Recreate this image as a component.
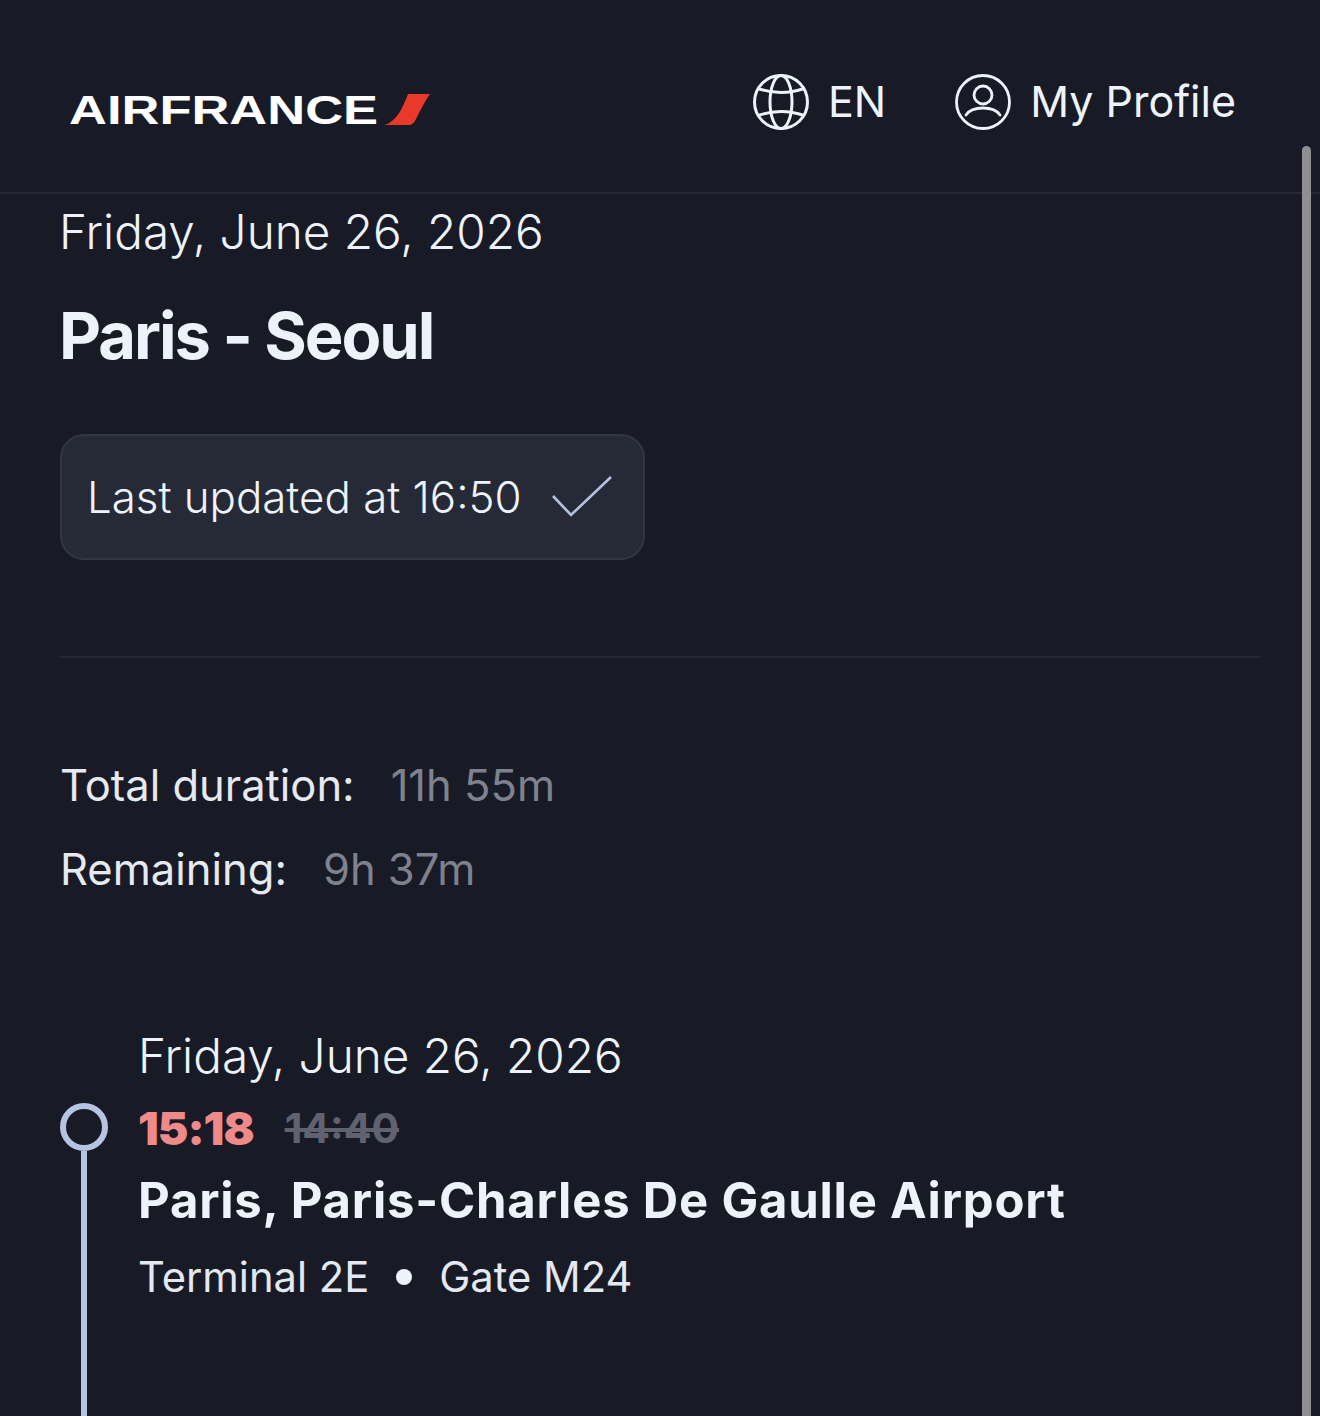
<script lang="ts">
</script>

<div class="page">
	<header class="topbar">
		<div class="logo">
			<span class="wordmark">AIRFRANCE</span>
			<svg class="swoosh" width="46" height="34" viewBox="0 0 46 34">
				<path d="M23 1H45C40 8 35 18 31 26C29 30 27 32 23 32H0C12 28 18 14 23 1Z" fill="#e8392a" />
			</svg>
		</div>
		<nav class="nav">
			<button class="nav-item">
				<svg width="56" height="56" viewBox="0 0 56 56" fill="none" stroke="currentColor" stroke-width="3">
					<circle cx="28" cy="28" r="26.5" />
					<ellipse cx="28" cy="28" rx="11" ry="26.5" />
					<path d="M5 14.5Q28 22.5 51 14.5M5 41.5Q28 33.5 51 41.5" />
				</svg>
				<span>EN</span>
			</button>
			<button class="nav-item">
				<svg width="56" height="56" viewBox="0 0 56 56" fill="none" stroke="currentColor" stroke-width="2.8">
					<circle cx="28" cy="28" r="26.5" />
					<circle cx="28" cy="21" r="9" />
					<path d="M11 41C15 35 22 34 28 34C34 34 41 35 45 41" stroke-linecap="round" />
				</svg>
				<span>My Profile</span>
			</button>
		</nav>
	</header>

	<main class="content">
		<p class="date first">Friday, June 26, 2026</p>
		<h1>Paris - Seoul</h1>
		<div class="status">
			<span>Last updated at 16:50</span>
			<svg width="62" height="44" viewBox="0 0 62 44" fill="none" stroke="#b5c2de" stroke-width="2.6">
				<path d="M2 21L20 40L60 2" />
			</svg>
		</div>
		<hr />
		<dl class="durations">
			<div><dt>Total duration:</dt><dd>11h 55m</dd></div>
			<div><dt>Remaining:</dt><dd>9h 37m</dd></div>
		</dl>
		<section class="leg">
			<div class="track">
				<span class="dot"></span>
				<span class="line"></span>
			</div>
			<div class="stop">
				<p class="date">Friday, June 26, 2026</p>
				<p class="times"><strong>15:18</strong><s>14:40</s></p>
				<h2>Paris, Paris-Charles De Gaulle Airport</h2>
				<p class="gate">Terminal 2E<i></i>Gate M24</p>
			</div>
		</section>
	</main>

	<div class="scrollbar"></div>
</div>

<style>
	:global(body) {
		background: #181b25;
	}
	.page {
		position: relative;
		height: 1416px;
		overflow: hidden;
		background: #181b25;
		color: #eef3fb;
		font-family: Inter, sans-serif;
	}
	.topbar {
		height: 194px;
		box-sizing: border-box;
		border-bottom: 2px solid #252833;
		display: flex;
		justify-content: space-between;
		padding: 0 84px 0 69px;
	}
	.logo {
		display: flex;
		align-items: center;
		margin-top: 28px;
	}
	.wordmark {
		font-family: "Liberation Sans", sans-serif;
		font-weight: 700;
		font-size: 41px;
		line-height: 1;
		color: #fff;
		transform: scaleX(1.28);
		transform-origin: left center;
		margin-right: 75px;
	}
	.nav {
		display: flex;
		gap: 69px;
		padding-top: 74px;
	}
	.nav-item {
		display: flex;
		align-items: flex-start;
		gap: 19px;
		padding: 0;
		border: 0;
		background: none;
		color: inherit;
		font: inherit;
		font-size: 43px;
		line-height: 56px;
	}
	.nav-item span {
		margin-top: -1px;
	}
	.content {
		padding: 0 60px;
	}
	.date {
		margin: 0;
		font-size: 47.7px;
		line-height: 76px;
		font-weight: 300;
	}
	.date.first {
		margin-left: -1px;
	}
	h1 {
		margin: 28px 0 0 -1px;
		font-size: 65px;
		line-height: 76px;
		font-weight: 700;
		letter-spacing: -2px;
	}
	.status {
		display: inline-flex;
		align-items: center;
		gap: 29px;
		height: 126px;
		box-sizing: border-box;
		margin-top: 60px;
		padding: 0 30px 0 25px;
		background: #262a36;
		border: 2px solid #323644;
		border-radius: 24px;
		font-size: 43.8px;
		font-weight: 300;
		vertical-align: top;
	}
	hr {
		margin: 96px 0 0;
		border: 0;
		height: 2px;
		background: #252833;
	}
	.durations {
		margin: 99px 0 0;
		font-size: 43.5px;
		line-height: 56px;
	}
	.durations div {
		display: flex;
		gap: 36px;
		margin-bottom: 28px;
	}
	dt {
		color: #e6e9f0;
	}
	dd {
		margin: 0;
		color: #7f828e;
	}
	.leg {
		display: flex;
		gap: 30px;
		margin-top: 121px;
	}
	.track {
		width: 48px;
		display: flex;
		flex-direction: column;
		align-items: center;
		padding-top: 85px;
	}
	.dot {
		width: 48px;
		height: 48px;
		box-sizing: border-box;
		border: 6px solid #b5c4e3;
		border-radius: 50%;
		flex: none;
	}
	.line {
		width: 6px;
		height: 300px;
		background: #b5c4e3;
		flex: none;
	}
	.times {
		margin: 6px 0 0;
		display: flex;
		align-items: center;
		gap: 31px;
		height: 56px;
		font-weight: 700;
	}
	.times strong {
		font-size: 46px;
		color: #ee8a8a;
		letter-spacing: -1px;
	}
	.times s {
		font-size: 41px;
		color: #60636f;
	}
	h2 {
		margin: 17px 0 0;
		font-size: 49px;
		line-height: 56px;
		font-weight: 700;
		letter-spacing: 0.8px;
	}
	.gate {
		margin: 20px 0 0;
		font-size: 41.7px;
		line-height: 56px;
		display: flex;
		align-items: center;
		color: #e3e8f1;
	}
	.gate i {
		width: 16px;
		height: 16px;
		border-radius: 50%;
		background: #eef3fb;
		margin: 0 27px;
	}
	.scrollbar {
		position: absolute;
		left: 1302px;
		top: 146px;
		bottom: 0;
		width: 9px;
		border-radius: 5px 5px 0 0;
		background: #8e8e93;
	}
</style>
